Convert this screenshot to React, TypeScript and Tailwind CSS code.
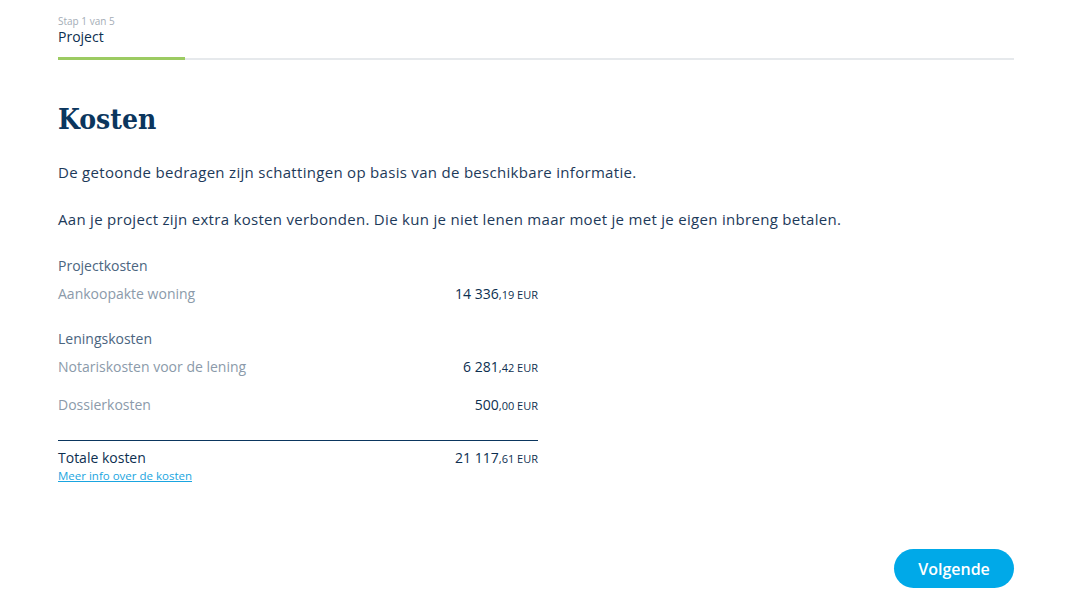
import React from "react";

type Line = { label: string; whole: string; cents: string };

const groups: { title: string; lines: Line[] }[] = [
  {
    title: "Projectkosten",
    lines: [{ label: "Aankoopakte woning", whole: "14 336", cents: "19" }],
  },
  {
    title: "Leningskosten",
    lines: [
      { label: "Notariskosten voor de lening", whole: "6 281", cents: "42" },
      { label: "Dossierkosten", whole: "500", cents: "00" },
    ],
  },
];

function Amount({ whole, cents }: { whole: string; cents: string }) {
  return (
    <span className="text-[14px] text-[#0d2f50]">
      {whole}
      <span className="text-[11px]">,{cents} EUR</span>
    </span>
  );
}

export default function App() {
  return (
    <div
      className="min-h-[610px] bg-white px-[58px] pt-[15px]"
      style={{ fontFamily: '"Open Sans", "Liberation Sans", sans-serif' }}
    >
      {/* stepper */}
      <div className="w-[956px]">
        <p className="text-[10px] leading-[12px] text-[#a4adb6]">Stap 1 van 5</p>
        <p className="mt-[1px] text-[14px] leading-[18px] text-[#0d2f50]">Project</p>
        <div className="mt-[11px] flex h-[3px] items-end">
          <div className="h-[3px] w-[127px] bg-[#9ccb62]" />
          <div className="h-[2px] flex-1 bg-[#e6e9ec]" />
        </div>
      </div>

      <h1
        className="mt-[42px] text-[28px] font-bold leading-[36px] text-[#0b365e]"
        style={{ fontFamily: '"DejaVu Serif", "Liberation Serif", serif', fontStretch: "condensed" }}
      >
        Kosten
      </h1>

      <p className="mt-[24px] text-[15px] leading-[20px] tracking-[0.3px] text-[#1d3a5a]">
        De getoonde bedragen zijn schattingen op basis van de beschikbare informatie.
      </p>
      <p className="mt-[27px] text-[15px] leading-[20px] tracking-[0.3px] text-[#1d3a5a]">
        Aan je project zijn extra kosten verbonden. Die kun je niet lenen maar moet je met je eigen inbreng betalen.
      </p>

      <div className="mt-[28px] w-[480px]">
        {groups.map((g, gi) => (
          <div key={g.title} className={gi > 0 ? "mt-[26px]" : ""}>
            <p className="text-[14px] leading-[18px] text-[#4b6580]">{g.title}</p>
            {g.lines.map((l, li) => (
              <div
                key={l.label}
                className={`flex items-baseline justify-between leading-[18px] ${li === 0 ? "mt-[10px]" : "mt-[19px]"}`}
              >
                <span className="text-[14px] text-[#8b9aaa]">{l.label}</span>
                <Amount whole={l.whole} cents={l.cents} />
              </div>
            ))}
          </div>
        ))}

        <div className="mt-[25px] border-t border-[#0b365e] pt-[8px]">
          <div className="flex items-baseline justify-between leading-[18px]">
            <span className="text-[14px] text-[#0d2f50]">Totale kosten</span>
            <Amount whole="21 117" cents="61" />
          </div>
          <a href="#" className="mt-[1px] block text-[11.5px] leading-[14px] text-[#1aa5e0] underline">
            Meer info over de kosten
          </a>
        </div>
      </div>

      <div className="mt-[66px] flex w-[956px] justify-end">
        <button className="h-[39px] w-[120px] rounded-full bg-[#00a9e8] text-[16px] font-semibold text-white">
          Volgende
        </button>
      </div>
    </div>
  );
}
